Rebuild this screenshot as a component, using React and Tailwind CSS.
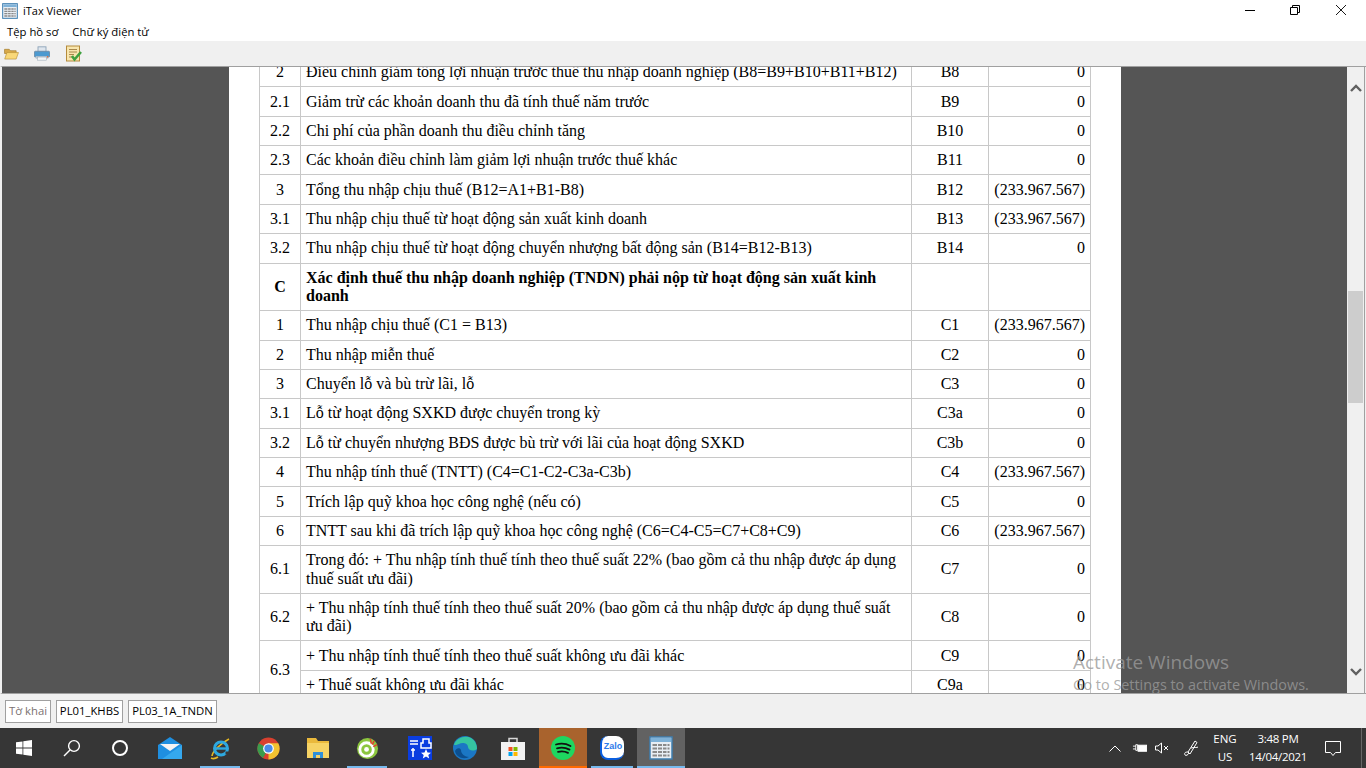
const LOSS = '(233.967.567)';

const rows = [
  { no: '2', text: 'Điều chỉnh giảm tổng lợi nhuận trước thuế thu nhập doanh nghiệp (B8=B9+B10+B11+B12)', code: 'B8', value: '0' },
  { no: '2.1', text: 'Giảm trừ các khoản doanh thu đã tính thuế năm trước', code: 'B9', value: '0' },
  { no: '2.2', text: 'Chi phí của phần doanh thu điều chỉnh tăng', code: 'B10', value: '0' },
  { no: '2.3', text: 'Các khoản điều chỉnh làm giảm lợi nhuận trước thuế khác', code: 'B11', value: '0' },
  { no: '3', text: 'Tổng thu nhập chịu thuế (B12=A1+B1-B8)', code: 'B12', value: LOSS },
  { no: '3.1', text: 'Thu nhập chịu thuế từ hoạt động sản xuất kinh doanh', code: 'B13', value: LOSS },
  { no: '3.2', text: 'Thu nhập chịu thuế từ hoạt động chuyển nhượng bất động sản (B14=B12-B13)', code: 'B14', value: '0' },
  { no: 'C', text: 'Xác định thuế thu nhập doanh nghiệp (TNDN) phải nộp từ hoạt động sản xuất kinh doanh', code: '', value: '', bold: true },
  { no: '1', text: 'Thu nhập chịu thuế (C1 = B13)', code: 'C1', value: LOSS },
  { no: '2', text: 'Thu nhập miễn thuế', code: 'C2', value: '0' },
  { no: '3', text: 'Chuyển lỗ và bù trừ lãi, lỗ', code: 'C3', value: '0' },
  { no: '3.1', text: 'Lỗ từ hoạt động SXKD được chuyển trong kỳ', code: 'C3a', value: '0' },
  { no: '3.2', text: 'Lỗ từ chuyển nhượng BĐS được bù trừ với lãi của hoạt động SXKD', code: 'C3b', value: '0' },
  { no: '4', text: 'Thu nhập tính thuế (TNTT) (C4=C1-C2-C3a-C3b)', code: 'C4', value: LOSS },
  { no: '5', text: 'Trích lập quỹ khoa học công nghệ (nếu có)', code: 'C5', value: '0' },
  { no: '6', text: 'TNTT sau khi đã trích lập quỹ khoa học công nghệ (C6=C4-C5=C7+C8+C9)', code: 'C6', value: LOSS },
  { no: '6.1', text: 'Trong đó: + Thu nhập tính thuế tính theo thuế suất 22% (bao gồm cả thu nhập được áp dụng thuế suất ưu đãi)', code: 'C7', value: '0' },
  { no: '6.2', text: '+ Thu nhập tính thuế tính theo thuế suất 20% (bao gồm cả thu nhập được áp dụng thuế suất ưu đãi)', code: 'C8', value: '0' },
  { no: '6.3', span: 2, text: '+ Thu nhập tính thuế tính theo thuế suất không ưu đãi khác', code: 'C9', value: '0' },
  { text: '+ Thuế suất không ưu đãi khác', code: 'C9a', value: '0' },
];

const cell = 'border border-[#c8c8c8] px-[5px] pt-[5.2px] pb-[4.85px]';

function TaxTable() {
  return (
    <table className="-mt-[10px] ml-[30px] w-[832px] table-fixed border-collapse font-['Liberation_Serif',serif] text-[16px] leading-[18.33px] text-black">
      <colgroup>
        <col className="w-[41px]" />
        <col className="w-[611px]" />
        <col className="w-[77px]" />
        <col className="w-[102px]" />
      </colgroup>
      <tbody>
        {rows.map((r, i) => (
          <tr key={i}>
            {r.no && (
              <td rowSpan={r.span} className={`${cell} text-center ${r.bold ? 'font-bold' : ''}`}>{r.no}</td>
            )}
            <td className={`${cell} ${r.bold ? 'font-bold' : ''}`}>{r.text}</td>
            <td className={`${cell} text-center`}>{r.code}</td>
            <td className={`${cell} text-right`}>{r.value}</td>
          </tr>
        ))}
      </tbody>
    </table>
  );
}

function GridIcon({ className }) {
  return (
    <svg viewBox="0 0 24 24" className={className}>
      <rect x="1" y="1" width="22" height="22" fill="#e8eef4" stroke="#3f7fb0" strokeWidth="1.5" />
      <rect x="2" y="2" width="20" height="4" fill="#7fb2d8" />
      <path d="M3.5 9h17M3.5 12.5h17M3.5 16h17M3.5 19.5h17" stroke="#8a8a8a" strokeWidth="2" />
      <path d="M8.5 7v14M13.5 7v14M18 7v14" stroke="#e8eef4" strokeWidth="1" />
    </svg>
  );
}

function Toolbar() {
  return (
    <div className="flex h-[25px] items-center bg-[#f0f0f0]">
      <svg viewBox="0 0 16 14" className="ml-[4px] h-[13px] w-[15px]">
        <path d="M.5 2.5h5l1.5 1.5h6v3H.5z" fill="#d8a94a" stroke="#a27a2a" strokeWidth=".7" />
        <path d="M.7 13 3 6h12.5L13 13z" fill="#f9d878" stroke="#b88f35" strokeWidth=".7" />
      </svg>
      <svg viewBox="0 0 18 16" className="ml-[15px] h-[17px] w-[16px]">
        <rect x="4.5" y=".5" width="9" height="6" fill="#dfe6ee" stroke="#8ba2b8" />
        <rect x=".5" y="5.5" width="17" height="6.5" rx="1" fill="#4d9ad0" stroke="#6b8aa5" />
        <rect x="2" y="11" width="14" height="3" fill="#bcc8d2" />
        <rect x="4" y="12" width="10" height="3.5" fill="#f3f5f7" stroke="#9aa8b5" strokeWidth=".6" />
        <rect x="14.5" y="11" width="1.5" height="1.5" fill="#e0602a" />
      </svg>
      <svg viewBox="0 0 16 16" className="ml-[16px] h-[17px] w-[16px]">
        <rect x=".5" y=".5" width="13" height="15" fill="#f8e6ae" stroke="#b58b3c" />
        <path d="M3 4h8M3 6.5h8M3 9h5M3 11.5h4" stroke="#a9884c" />
        <path d="M6 10.5 8.5 14 15 6.5" fill="none" stroke="#3fa13f" strokeWidth="2.6" />
      </svg>
    </div>
  );
}

function Scrollbar() {
  return (
    <div className="flex w-[17px] flex-col bg-[#f0f0f0]">
      <div className="flex h-[40px] items-center justify-center pt-[2px]">
        <svg viewBox="0 0 12 8" className="h-[8px] w-[12px]" fill="none" stroke="#606060" strokeWidth="2.4">
          <path d="M1 7l5-5 5 5" />
        </svg>
      </div>
      <div className="mt-[184px] ml-px h-[112px] w-[15px] bg-[#cdcdcd]" />
      <div className="flex flex-1 items-end justify-center pb-[17px]">
        <svg viewBox="0 0 12 8" className="h-[8px] w-[12px]" fill="none" stroke="#606060" strokeWidth="2.4">
          <path d="M1 1l5 5 5-5" />
        </svg>
      </div>
    </div>
  );
}

function Tab({ label, muted, width }) {
  return (
    <div className={`flex h-[23px] items-center justify-center border border-[#a0a0a0] bg-white text-[11.3px] ${width} ${muted ? 'text-[#7a7070]' : 'text-black'}`}>
      {label}
    </div>
  );
}

function TaskIcon({ children, line = '', width = 'w-[48px]' }) {
  return (
    <div className={`relative flex h-10 items-center justify-center ${width}`}>
      {children}
      {line && <div className={`absolute inset-x-[4px] bottom-0 h-[2px] ${line}`} />}
    </div>
  );
}

function Taskbar() {
  return (
    <div className="flex h-10 items-center bg-[#363636] text-white">
      <TaskIcon>
        <svg viewBox="0 0 16 16" className="h-4 w-4" fill="#fff">
          <path d="M0 2.3 6.5 1.4v6.2H0zM7.3 1.3 16 0v7.6H7.3zM0 8.4h6.5v6.2L0 13.7zM7.3 8.4H16V16l-8.7-1.3z" />
        </svg>
      </TaskIcon>
      <TaskIcon>
        <svg viewBox="0 0 18 18" className="h-[18px] w-[18px]" fill="none" stroke="#fff" strokeWidth="1.4">
          <circle cx="11" cy="7" r="5.4" />
          <path d="M7 11 1 17" />
        </svg>
      </TaskIcon>
      <TaskIcon>
        <div className="h-[16px] w-[16px] rounded-full border-[2.5px] border-white" />
      </TaskIcon>
      <TaskIcon width="w-[52px]">
        <svg viewBox="0 0 24 22" className="h-[22px] w-[24px]">
          <path d="M0 8 12 0l12 8v14H0z" fill="#1f8fe0" />
          <path d="M2 7h20L12 14z" fill="#f4f4f4" />
          <path d="M24 8v14H4z" fill="#35a8ee" />
        </svg>
      </TaskIcon>
      <TaskIcon line="bg-[#76b9ed]">
        <svg viewBox="0 0 24 24" className="h-[24px] w-[24px]">
          <path d="M4 20a5 16 52 0 1 17-17" fill="none" stroke="#e8b923" strokeWidth="1.6" />
          <path d="M3 22c2 1 4 1 7-1" fill="none" stroke="#e8b923" strokeWidth="1.6" />
          <circle cx="13" cy="12.5" r="6.5" fill="none" stroke="#2ea9e0" strokeWidth="3" />
          <path d="M7 12.5h13" stroke="#2ea9e0" strokeWidth="2.4" />
          <path d="M17.5 15.5h3.5v3h-3.5z" fill="#363636" />
        </svg>
      </TaskIcon>
      <TaskIcon width="w-[49px]">
        <svg viewBox="0 0 24 24" className="h-[23px] w-[23px]">
          <circle cx="12" cy="12" r="11.5" fill="#d9402f" />
          <path d="M1.8 6.5 12 12 6.2 22A11.5 11.5 0 0 1 1.8 6.5z" fill="#3a9c4d" />
          <path d="M12 6.5h10.2A11.5 11.5 0 0 1 12 23.5L12 12z" fill="#f2c230" />
          <circle cx="12" cy="12" r="5.6" fill="#fff" />
          <circle cx="12" cy="12" r="4.3" fill="#4a8be8" />
        </svg>
      </TaskIcon>
      <TaskIcon width="w-[50px]">
        <svg viewBox="0 0 22 20" className="h-[20px] w-[22px]">
          <path d="M0 0h9l2 3h11v17H0z" fill="#eab93c" />
          <rect y="5" width="22" height="15" fill="#f6d365" />
          <path d="M6 20v-6h10v6h-3v-3H9v3z" fill="#2f8fd8" />
        </svg>
      </TaskIcon>
      <TaskIcon line="bg-[#76b9ed]">
        <svg viewBox="0 0 24 24" className="h-[23px] w-[23px]">
          <circle cx="12" cy="12" r="11" fill="#8cc63f" />
          <circle cx="11" cy="13" r="7" fill="none" stroke="#fff" strokeWidth="3" />
          <circle cx="11" cy="13" r="2.5" fill="#fff" />
          <path d="M15 2l1 5M19 4l-2 4M22 8l-4 2" stroke="#e0452c" strokeWidth="1.6" />
        </svg>
      </TaskIcon>
      <TaskIcon width="w-[58px]">
        <svg viewBox="0 0 24 24" className="h-[24px] w-[24px]">
          <rect width="24" height="24" fill="#0a3de0" />
          <path d="M2 5h8M2 8h8M5 12v9M3 14h4M15 3h6v4h2v5H13V7h2z" stroke="#fff" strokeWidth="1.5" fill="none" />
          <path d="M18 13l1.5 3.5 3.5.3-2.7 2.3.9 3.5-3.2-2-3.2 2 .9-3.5-2.7-2.3 3.5-.3z" fill="#fff" />
        </svg>
      </TaskIcon>
      <TaskIcon width="w-[32px]">
        <svg viewBox="0 0 24 24" className="h-[24px] w-[24px] shrink-0">
          <circle cx="12" cy="12" r="12" fill="#1b77c4" />
          <path d="M1 9C3 2 12-1 18 2c5 3 6 8 6 11-4 3-9 1-9-2 0-4-6-5-9-3-2 1-4 1-5 1z" fill="#35c4a0" />
          <path d="M8 14c0 4 4 7 8 7-6 3-13 0-14-6 1-3 5-4 6-1z" fill="#0c4f8f" />
        </svg>
      </TaskIcon>
      <TaskIcon width="w-[58px] pl-[6px]">
        <svg viewBox="0 0 24 24" className="h-[24px] w-[24px]">
          <path d="M8 6V2.5h8V6" fill="none" stroke="#d8d8d8" strokeWidth="1.5" />
          <rect y="6" width="24" height="18" fill="#f2f2f2" />
          <rect x="7.5" y="11" width="4" height="4" fill="#f25022" />
          <rect x="12.5" y="11" width="4" height="4" fill="#7fba00" />
          <rect x="7.5" y="16" width="4" height="4" fill="#00a4ef" />
          <rect x="12.5" y="16" width="4" height="4" fill="#ffb900" />
        </svg>
      </TaskIcon>
      <div className="relative flex h-10 w-[48px] items-center justify-center bg-[#a9632d]">
        <svg viewBox="0 0 24 24" className="h-[24px] w-[24px]">
          <circle cx="12" cy="12" r="12" fill="#1ed760" />
          <path d="M5 8.5c5-1.5 10-1 14.5 1.5M6 12.3c4.5-1.2 8.5-.8 12.5 1.3M7 15.8c3.5-.9 7-.6 10 1.1" fill="none" stroke="#111" strokeWidth="1.8" strokeLinecap="round" />
        </svg>
        <div className="absolute inset-x-0 bottom-0 h-[2px] bg-[#ff6a00]" />
      </div>
      <TaskIcon width="w-[50px]" line="bg-[#76b9ed]">
        <div className="flex h-[24px] w-[24px] items-center justify-center rounded-[8px] border-l-[2px] border-b-[2px] border-[#0a5fe0] bg-white font-['Liberation_Sans',sans-serif] text-[9px] font-bold text-[#2d7bea]">
          Zalo
        </div>
      </TaskIcon>
      <div className="relative flex h-10 w-[48px] items-center justify-center bg-[#626262]">
        <GridIcon className="h-[24px] w-[24px]" />
        <div className="absolute inset-x-0 bottom-0 h-[2px] bg-[#76b9ed]" />
      </div>
      <div className="ml-auto flex h-10 items-center">
        <svg viewBox="0 0 12 7" className="h-[7px] w-[12px]" fill="none" stroke="#fff">
          <path d="M.5 6.5 6 1l5.5 5.5" />
        </svg>
        <svg viewBox="0 0 16 10" className="ml-[11px] h-[10px] w-[15px]" fill="none" stroke="#fff">
          <path d="M1 3h3M1 6h3M4 1.5h2v6H4z" />
          <rect x="6.5" y="2" width="9" height="6.5" fill="#fff" />
        </svg>
        <svg viewBox="0 0 14 12" className="ml-[8px] h-[12px] w-[14px]" fill="none" stroke="#fff">
          <path d="M.5 4H3L6.5 1v10L3 8H.5zM9 4l4 4M13 4l-4 4" />
        </svg>
        <svg viewBox="0 0 16 18" className="ml-[14px] h-[18px] w-[16px]" fill="none" stroke="#fff">
          <path d="M5 13 12 2l2 1.5L7 15zM8 9c3-1 6 0 7-1M5 13c-3 0-4 1-3 3 1 1 3 0 4-2" />
        </svg>
        <div className="ml-[14px] flex w-[24px] flex-col items-center font-['Open_Sans',sans-serif] text-[11.5px] leading-[18px]">
          <span>ENG</span>
          <span>US</span>
        </div>
        <div className="ml-[13px] flex w-[56px] flex-col items-center whitespace-nowrap font-['Open_Sans',sans-serif] text-[11.5px] leading-[18px] tracking-[-0.3px]">
          <span>3:48 PM</span>
          <span>14/04/2021</span>
        </div>
        <svg viewBox="0 0 16 15" className="ml-[19px] h-[15px] w-[16px]" fill="none" stroke="#fff">
          <path d="M.5.5h15v11h-5l-2.5 3-2.5-3h-5z" />
        </svg>
        <div className="ml-[20px] mr-[4px] h-10 w-px bg-[#666]" />
      </div>
    </div>
  );
}

export default function App() {
  return (
    <div className="relative flex h-screen flex-col overflow-hidden bg-white font-['Open_Sans',sans-serif] text-black">
      <div className="flex h-[22px] items-center bg-white">
        <GridIcon className="ml-[2px] h-4 w-4" />
        <span className="ml-[5px] text-[11px]">iTax Viewer</span>
        <div className="ml-auto mr-[20px] flex items-center pb-[2px]">
          <svg viewBox="0 0 10 10" className="h-[10px] w-[10px]" stroke="#000">
            <path d="M0 5.5h10" />
          </svg>
          <svg viewBox="0 0 10 10" className="ml-[35px] h-[10px] w-[10px]" fill="none" stroke="#000">
            <path d="M.5 2.5h7v7h-7zM2.5 2.5v-2h7v7h-2" />
          </svg>
          <svg viewBox="0 0 10 10" className="ml-[36px] h-[10px] w-[10px]" stroke="#000" strokeWidth=".9">
            <path d="M0 0l10 10M10 0 0 10" />
          </svg>
        </div>
      </div>
      <div className="flex h-[19px] items-center gap-[14px] bg-white pl-[7px] pt-[2px] text-[11.3px]">
        <span>Tệp hồ sơ</span>
        <span>Chữ ký điện tử</span>
      </div>
      <Toolbar />
      <div className="flex min-h-0 flex-1 border-y border-[#a0a0a0] border-x-2 border-r-0 border-l-[#f0f0f0] bg-[#555555]">
        <div className="min-w-0 flex-1 overflow-hidden">
          <div className="ml-[227px] h-full w-[892px] overflow-hidden bg-white">
            <TaxTable />
          </div>
        </div>
        <Scrollbar />
        <div className="w-px bg-[#a0a0a0]" />
        <div className="w-px bg-[#f0f0f0]" />
      </div>
      <div className="flex h-[34px] items-center gap-[5px] bg-[#f0f0f0] pl-[5px]">
        <Tab label="Tờ khai" muted width="w-[46px]" />
        <Tab label="PL01_KHBS" width="w-[67px]" />
        <Tab label="PL03_1A_TNDN" width="w-[89px]" />
      </div>
      <Taskbar />
      <div className="pointer-events-none absolute left-[1073px] top-[649px] text-[#9a9a9a]/80">
        <div className="text-[19px] leading-[26px]">Activate Windows</div>
        <div className="text-[14.4px] leading-[20px]">Go to Settings to activate Windows.</div>
      </div>
    </div>
  );
}
